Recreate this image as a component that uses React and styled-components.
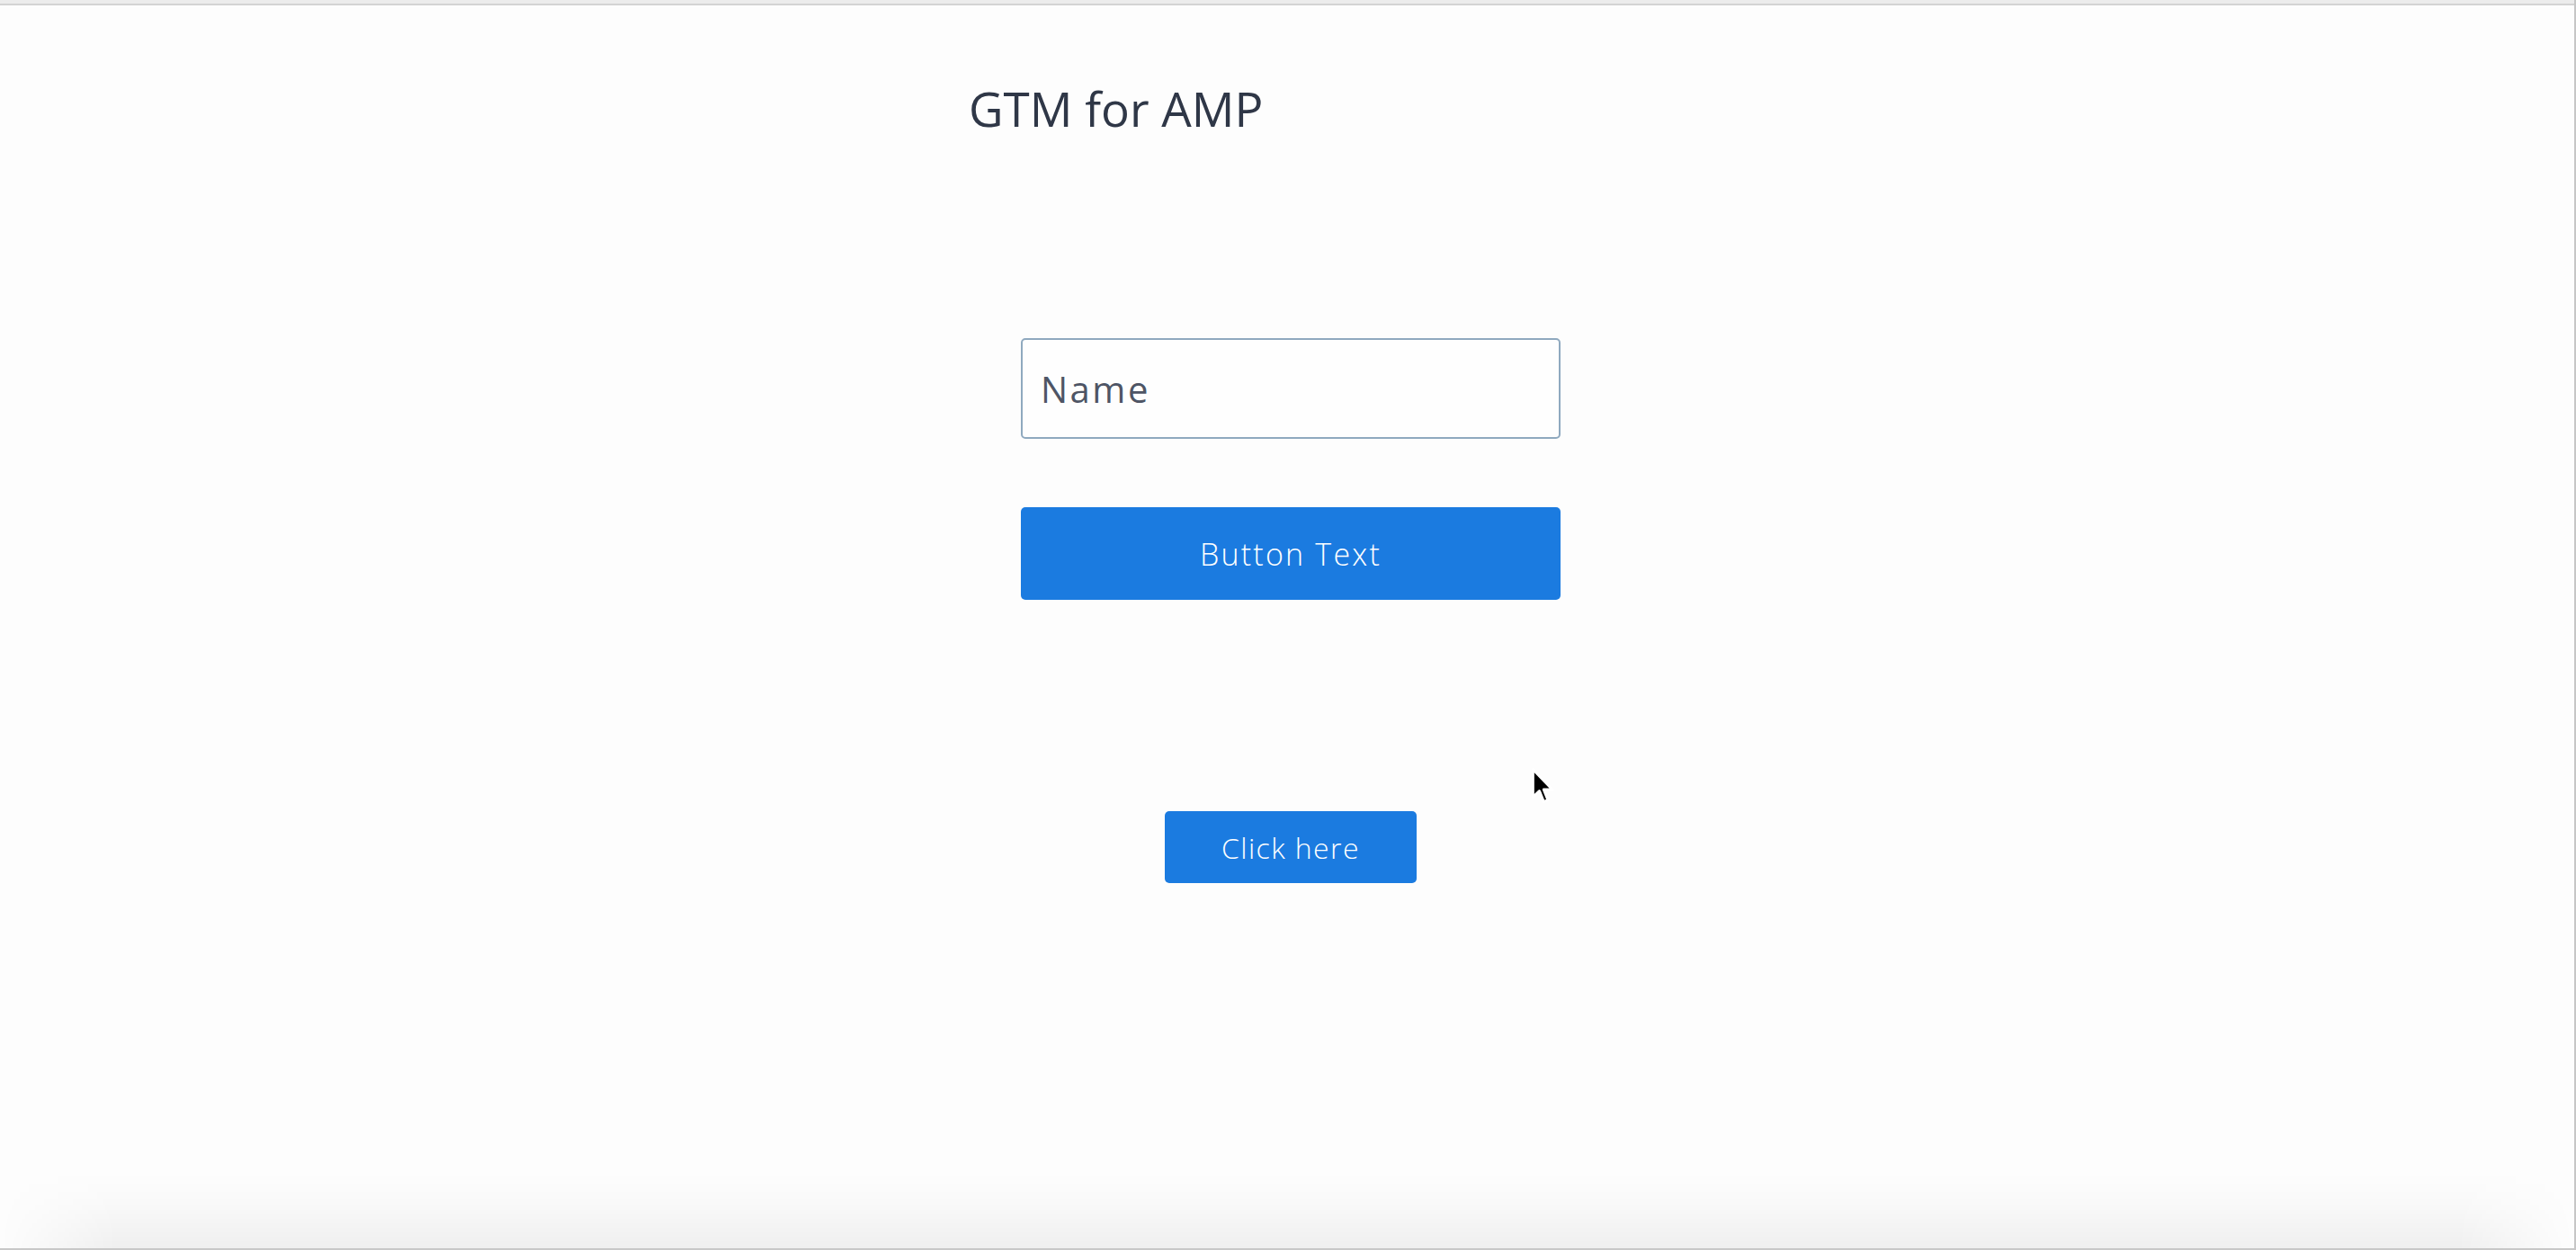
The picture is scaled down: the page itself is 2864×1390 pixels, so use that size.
import React from "react";
import styled, { createGlobalStyle } from "styled-components";

const GlobalStyle = createGlobalStyle`
  html, body {
    margin: 0;
    padding: 0;
    background: #fdfdfd;
  }
  * { box-sizing: border-box; }
  body {
    font-family: "Open Sans", "Liberation Sans", sans-serif;
  }
`;

const Window = styled.div`
  position: relative;
  height: 1390px;
  display: flex;
  flex-direction: column;
  background: #fdfdfd;
  border-right: 2px solid #c6c6c6;
  overflow: hidden;
`;

const TopBar = styled.div`
  height: 6px;
  flex: none;
  background: #ececec;
  border-bottom: 2px solid #d3d3d3;
`;

const Main = styled.main`
  flex: 1;
  padding-left: 8px;
`;

const Container = styled.div`
  width: 716px;
  margin: 0 auto;
  display: flex;
  flex-direction: column;
`;

const Title = styled.h1`
  margin: 88px 0 0;
  font-family: "Open Sans", "Liberation Sans", sans-serif;
  font-weight: 400;
  font-size: 53px;
  line-height: 1;
  color: #2f3747;
`;

const Form = styled.form`
  width: 600px;
  margin: 229px auto 0;
  display: flex;
  flex-direction: column;
  gap: 76px;
`;

const TextInput = styled.input`
  width: 100%;
  height: 112px;
  border: 2px solid #8fa9bf;
  border-radius: 5px;
  padding: 0 20px;
  background: #fefefe;
  font-family: "Open Sans", "Liberation Sans", sans-serif;
  font-weight: 400;
  font-size: 40px;
  letter-spacing: 2.5px;
  color: #2f3747;
  outline: none;
  &::placeholder {
    color: #4e5565;
    opacity: 1;
  }
`;

const PrimaryButton = styled.button`
  width: ${(p) => p.$width}px;
  height: ${(p) => p.$height}px;
  border: none;
  border-radius: 5px;
  background: #1b7be0;
  color: #ffffff;
  font-family: "Open Sans", "Liberation Sans", sans-serif;
  font-weight: 300;
  font-size: ${(p) => p.$size}px;
  letter-spacing: ${(p) => p.$spacing}px;
  padding: 0;
  display: flex;
  align-items: center;
  justify-content: center;
  cursor: pointer;
  align-self: center;
`;

const ClickRow = styled.div`
  display: flex;
  justify-content: center;
  margin-top: 235px;
`;

const BottomShadow = styled.div`
  height: 84px;
  flex: none;
  background: linear-gradient(
    to bottom,
    rgba(0, 0, 0, 0) 0%,
    rgba(0, 0, 0, 0.015) 40%,
    rgba(0, 0, 0, 0.055) 100%
  );
  -webkit-mask-image: linear-gradient(
    to right,
    transparent 0px,
    #000 130px,
    #000 calc(100% - 130px),
    transparent 100%
  );
  mask-image: linear-gradient(
    to right,
    transparent 0px,
    #000 130px,
    #000 calc(100% - 130px),
    transparent 100%
  );
`;

const BottomLine = styled.div`
  height: 2px;
  flex: none;
  background: #c8c8c8;
`;

const Cursor = styled.svg`
  position: absolute;
  left: 1701px;
  top: 853px;
  width: 30px;
  height: 45px;
  pointer-events: none;
`;

export default function App() {
  return (
    <>
      <GlobalStyle />
      <Window>
        <TopBar />
        <Main>
          <Container>
            <Title>GTM for AMP</Title>
            <Form onSubmit={(e) => e.preventDefault()}>
              <TextInput type="text" placeholder="Name" />
              <PrimaryButton type="submit" $width={600} $height={103} $size={34} $spacing={2.2}>
                Button Text
              </PrimaryButton>
            </Form>
            <ClickRow>
              <PrimaryButton type="button" $width={280} $height={80} $size={32} $spacing={1.4}>
                Click here
              </PrimaryButton>
            </ClickRow>
          </Container>
        </Main>
        <BottomShadow />
        <BottomLine />
        <Cursor viewBox="0 0 18 27">
          <path
            d="M2 1.5 L2 20 L6.3 16 L9.2 23.2 L12 22 L9.2 15 L15 15 Z"
            fill="#000"
            stroke="#fff"
            strokeWidth="1.8"
            strokeLinejoin="round"
          />
        </Cursor>
      </Window>
    </>
  );
}
